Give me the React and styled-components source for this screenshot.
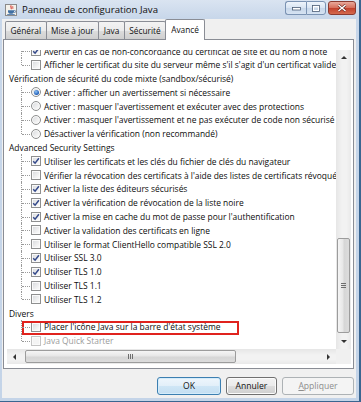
import React from "react";
import styled, { createGlobalStyle, css } from "styled-components";

const Global = createGlobalStyle`
  html, body { margin: 0; padding: 0; background: #ffffff; }
  body { font-family: "Open Sans", "Noto Sans", sans-serif; color: #111; }
`;

const FONT = `"Open Sans", "Noto Sans", sans-serif`;

const Window = styled.div`
  width: 361px;
  height: 402px;
  box-sizing: border-box;
  display: flex;
  flex-direction: column;
  background: linear-gradient(#dae4f1, #c8d7ea 18px, #c4d4e8);
  border-right: 2px solid #3a6590;
  border-bottom: 1px solid #3a6590;
  padding: 0 3px 3px 2px;
  overflow: hidden;
`;

const TitleBar = styled.div`
  height: 19px;
  flex: none;
  display: flex;
  align-items: center;
  padding-left: 3px;
  gap: 4px;
`;

const TitleText = styled.span`
  font-family: ${FONT};
  font-size: 9.6px;
  color: #101010;
  flex: 1;
  white-space: nowrap;
`;

const Controls = styled.div`
  display: flex;
  align-items: flex-start;
  align-self: flex-start;
  margin-top: 1px;
  gap: 2px;
`;

const CtrlGroup = styled.div`
  display: flex;
`;

const CtrlButton = styled.div`
  height: 14px;
  width: ${(p) => p.$w}px;
  box-sizing: border-box;
  border: 1px solid ${(p) => (p.$close ? "#8b3a30" : "#7b93b3")};
  display: flex;
  align-items: center;
  justify-content: center;
  background: ${(p) =>
    p.$close
      ? "linear-gradient(#e9a99b, #d66d5a 50%, #c1402c 51%, #d56a4e)"
      : "linear-gradient(#eef4fb, #d8e4f2 50%, #c7d7ea 51%, #d6e3f2)"};
  ${(p) =>
    p.$left &&
    css`
      border-radius: 3px 0 0 3px;
      border-right: none;
    `}
  ${(p) =>
    p.$right &&
    css`
      border-radius: 0 3px 3px 0;
    `}
  ${(p) =>
    p.$close &&
    css`
      border-radius: 3px;
    `}
`;

const Client = styled.div`
  flex: 1;
  background: #f0f0f0;
  display: flex;
  flex-direction: column;
  padding: 0 2px 0 1px;
`;

const TabStrip = styled.div`
  height: 20px;
  display: flex;
  align-items: flex-end;
  padding-left: 2px;
  position: relative;
  z-index: 2;
`;

const Tab = styled.div`
  font-family: ${FONT};
  font-size: 8.3px;
  color: #111;
  box-sizing: border-box;
  height: 18px;
  padding: 0 4.5px;
  margin-right: -1px;
  display: flex;
  align-items: center;
  white-space: nowrap;
  border: 1px solid #8a8d95;
  border-bottom: none;
  border-radius: 2px 2px 0 0;
  background: linear-gradient(#f3f3f3, #ebebeb 50%, #dddddd 51%, #cfcfcf);
  ${(p) =>
    p.$active &&
    css`
      height: 21px;
      margin-bottom: -1px;
      padding: 0 5px 2px;
      background: #ffffff;
      position: relative;
      z-index: 3;
    `}
`;

const TabPanel = styled.div`
  height: 330px;
  box-sizing: border-box;
  border: 1px solid #8a8d95;
  background: #ffffff;
  padding: 10px 2px 4px 3px;
  display: grid;
  grid-template-columns: 329px 15px;
  grid-template-rows: 299px 15px;
`;

const Viewport = styled.div`
  overflow: hidden;
  background: #ffffff;
  position: relative;
`;

const List = styled.div`
  margin-top: -5.9px;
  display: flex;
  flex-direction: column;
`;

const Row = styled.div`
  height: 13.8px;
  display: flex;
  align-items: center;
  white-space: nowrap;
  font-family: ${FONT};
  font-size: 8.45px;
  color: ${(p) => (p.$disabled ? "#9c9c9c" : "#0c0c0c")};
  position: relative;
`;

const HeaderRow = styled(Row)`
  padding-left: 2px;
`;

const ItemRow = styled(Row)`
  padding-left: 24px;
  gap: 3px;
  &::before {
    content: "";
    position: absolute;
    left: 14px;
    top: 0;
    bottom: ${(p) => (p.$last ? "50%" : "0")};
    border-left: 1px dotted #9a9a9a;
  }
  &::after {
    content: "";
    position: absolute;
    left: 15px;
    width: 8px;
    top: 50%;
    border-top: 1px dotted #9a9a9a;
  }
`;

const Box = styled.span`
  width: 10px;
  height: 10px;
  flex: none;
  box-sizing: border-box;
  border: 1px solid ${(p) => (p.$disabled ? "#c4c4c4" : "#8e8f8f")};
  background: ${(p) =>
    p.$disabled
      ? "#f4f4f4"
      : "linear-gradient(135deg, #d6d8db, #f4f4f4 70%, #fdfdfd)"};
  box-shadow: inset 0 0 0 1px #fafafa;
  display: flex;
  align-items: center;
  justify-content: center;
  border-radius: ${(p) => (p.$radio ? "50%" : "0")};
`;

const Dot = styled.span`
  width: 5px;
  height: 5px;
  border-radius: 50%;
  background: radial-gradient(circle at 40% 35%, #8fc3f5, #1d5ab5 70%);
`;

const Highlight = styled.span`
  position: absolute;
  left: 15px;
  top: 1px;
  width: 217px;
  height: 14px;
  box-sizing: border-box;
  border: 2px solid #e0231e;
  pointer-events: none;
`;

const VScroll = styled.div`
  display: flex;
  flex-direction: column;
  background: linear-gradient(to right, #e6e6e6, #f2f2f2 40%, #f2f2f2 70%, #e9e9e9);
`;

const HScroll = styled.div`
  display: flex;
  background: linear-gradient(#e6e6e6, #f2f2f2 40%, #f2f2f2 70%, #e9e9e9);
`;

const Corner = styled.div`
  background: #f0f0f0;
`;

const Arrow = styled.div`
  width: 15px;
  height: 15px;
  flex: none;
  display: flex;
  align-items: center;
  justify-content: center;
  &::before {
    content: "";
    width: 0;
    height: 0;
    ${(p) =>
      p.$dir === "up" &&
      css`
        border-left: 3px solid transparent;
        border-right: 3px solid transparent;
        border-bottom: 3px solid #333;
      `}
    ${(p) =>
      p.$dir === "down" &&
      css`
        border-left: 3px solid transparent;
        border-right: 3px solid transparent;
        border-top: 3px solid #333;
      `}
    ${(p) =>
      p.$dir === "left" &&
      css`
        border-top: 3px solid transparent;
        border-bottom: 3px solid transparent;
        border-right: 3px solid #333;
      `}
    ${(p) =>
      p.$dir === "right" &&
      css`
        border-top: 3px solid transparent;
        border-bottom: 3px solid transparent;
        border-left: 3px solid #333;
      `}
  }
`;

const Track = styled.div`
  flex: 1;
  display: flex;
  flex-direction: ${(p) => (p.$vertical ? "column" : "row")};
  justify-content: ${(p) => (p.$end ? "flex-end" : "flex-start")};
  padding: ${(p) => (p.$vertical ? "0 1px 1px" : "1px 0 1px 3px")};
`;

const Thumb = styled.div`
  box-sizing: border-box;
  border: 1px solid #9c9c9c;
  border-radius: 2px;
  display: flex;
  align-items: center;
  justify-content: center;
  ${(p) =>
    p.$vertical
      ? css`
          height: ${p.$size}px;
          background: linear-gradient(to right, #f5f5f5, #e7e7e7 45%, #d6d6d6 55%, #dcdcdc);
        `
      : css`
          width: ${p.$size}px;
          background: linear-gradient(#f5f5f5, #e7e7e7 45%, #d6d6d6 55%, #dcdcdc);
        `}
`;

const Grip = styled.span`
  ${(p) =>
    p.$vertical
      ? css`
          width: 5px;
          height: 5px;
          background: repeating-linear-gradient(#6e6e6e 0 1px, transparent 1px 2px);
        `
      : css`
          width: 5px;
          height: 5px;
          background: repeating-linear-gradient(to right, #6e6e6e 0 1px, transparent 1px 2px);
        `}
`;

const ButtonBar = styled.div`
  display: flex;
  justify-content: flex-end;
  gap: 5px;
  margin-top: 8px;
`;

const Button = styled.div`
  height: 18px;
  width: ${(p) => p.$w}px;
  box-sizing: border-box;
  border-radius: 3px;
  display: flex;
  align-items: center;
  justify-content: center;
  font-family: ${FONT};
  font-size: 8.6px;
  color: #111;
  border: 1px solid #707070;
  background: linear-gradient(#f2f2f2, #ebebeb 50%, #dddddd 51%, #cfcfcf);
  box-shadow: inset 0 0 0 1px #fbfbfb;
  ${(p) =>
    p.$default &&
    css`
      border-color: #3c7fb1;
      background: linear-gradient(#eef6fc, #e2eff9 50%, #cfe6f6 51%, #c4def1);
      box-shadow: inset 0 0 0 1px #d4ecfb;
    `}
  ${(p) =>
    p.$disabled &&
    css`
      border-color: #adb2b5;
      background: #f4f4f4;
      color: #8d8d8d;
      box-shadow: none;
    `}
`;

const Mnemonic = styled.span`
  text-decoration: underline;
`;

const JavaIcon = () => (
  <svg width="13" height="14" viewBox="0 0 13 14">
    <rect x="0.5" y="1.5" width="11" height="11" fill="#f4f1ea" stroke="#8b8b8b" />
    <path d="M6.3 2.5c-1.6 1.2 1 2-0.4 3.5" stroke="#d4342a" strokeWidth="1.1" fill="none" />
    <path d="M8 3.2c-1.2 0.9 0.7 1.6-0.3 2.6" stroke="#d4342a" strokeWidth="0.9" fill="none" />
    <path d="M3 7.2h6v1.2c0 1.4-1.3 2.3-3 2.3S3 9.8 3 8.4z" fill="#3f6fa3" />
    <path d="M9 7.6h0.8a0.9 0.9 0 0 1 0 1.8H8.8" stroke="#3f6fa3" strokeWidth="0.8" fill="none" />
    <path d="M2.2 11.5h7.6" stroke="#3f6fa3" strokeWidth="0.8" />
  </svg>
);

const CheckMark = () => (
  <svg width="8" height="8" viewBox="0 0 8 8">
    <path d="M1.2 4.2l1.9 2L6.9 1.2" stroke="#34498a" strokeWidth="1.5" fill="none" />
  </svg>
);

const MinGlyph = () => (
  <svg width="9" height="5" viewBox="0 0 9 5">
    <rect x="0.5" y="1.5" width="8" height="2.5" fill="#fff" stroke="#4b5d75" strokeWidth="0.8" />
  </svg>
);

const MaxGlyph = () => (
  <svg width="8" height="7" viewBox="0 0 8 7">
    <rect x="0.5" y="0.5" width="7" height="6" fill="#fff" stroke="#4b5d75" strokeWidth="0.8" />
    <rect x="2" y="2.4" width="4" height="2.6" fill="#c9d8ea" />
  </svg>
);

const CloseGlyph = () => (
  <svg width="10" height="8" viewBox="0 0 10 8">
    <path d="M1.5 1l7 6M8.5 1l-7 6" stroke="#5a1a12" strokeWidth="2.6" />
    <path d="M1.5 1l7 6M8.5 1l-7 6" stroke="#ffffff" strokeWidth="1.6" />
  </svg>
);

const groups = [
  {
    title: null,
    items: [
      { label: "Avertir en cas de non-concordance du certificat de site et du nom d'hôte", checked: true },
      { label: "Afficher le certificat du site du serveur même s'il s'agit d'un certificat valide" },
    ],
  },
  {
    title: "Vérification de sécurité du code mixte (sandbox/sécurisé)",
    radio: true,
    items: [
      { label: "Activer : afficher un avertissement si nécessaire", checked: true },
      { label: "Activer : masquer l'avertissement et exécuter avec des protections" },
      { label: "Activer : masquer l'avertissement et ne pas exécuter de code non sécurisé" },
      { label: "Désactiver la vérification (non recommandé)" },
    ],
  },
  {
    title: "Advanced Security Settings",
    items: [
      { label: "Utiliser les certificats et les clés du fichier de clés du navigateur", checked: true },
      { label: "Vérifier la révocation des certificats à l'aide des listes de certificats révoqués (CRL)" },
      { label: "Activer la liste des éditeurs sécurisés", checked: true },
      { label: "Activer la vérification de révocation de la liste noire", checked: true },
      { label: "Activer la mise en cache du mot de passe pour l'authentification", checked: true },
      { label: "Activer la validation des certificats en ligne" },
      { label: "Utiliser le format ClientHello compatible SSL 2.0" },
      { label: "Utiliser SSL 3.0", checked: true },
      { label: "Utiliser TLS 1.0", checked: true },
      { label: "Utiliser TLS 1.1" },
      { label: "Utiliser TLS 1.2" },
    ],
  },
  {
    title: "Divers",
    items: [
      { label: "Placer l'icône Java sur la barre d'état système", highlight: true },
      { label: "Java Quick Starter", disabled: true },
    ],
  },
];

const tabs = ["Général", "Mise à jour", "Java", "Sécurité", "Avancé"];

export default function App() {
  return (
    <>
      <Global />
      <Window>
        <TitleBar>
          <JavaIcon />
          <TitleText>Panneau de configuration Java</TitleText>
          <Controls>
            <CtrlGroup>
              <CtrlButton $w={21} $left>
                <MinGlyph />
              </CtrlButton>
              <CtrlButton $w={20} $right>
                <MaxGlyph />
              </CtrlButton>
            </CtrlGroup>
            <CtrlButton $w={28} $close>
              <CloseGlyph />
            </CtrlButton>
          </Controls>
        </TitleBar>
        <Client>
          <TabStrip>
            {tabs.map((t) => (
              <Tab key={t} $active={t === "Avancé"}>
                {t}
              </Tab>
            ))}
          </TabStrip>
          <TabPanel>
            <Viewport>
              <List>
                {groups.map((g, gi) => (
                  <React.Fragment key={gi}>
                    {g.title && <HeaderRow>{g.title}</HeaderRow>}
                    {g.items.map((it, ii) => (
                      <ItemRow
                        key={ii}
                        $last={ii === g.items.length - 1}
                        $disabled={it.disabled}
                      >
                        <Box $radio={g.radio} $disabled={it.disabled}>
                          {it.checked && (g.radio ? <Dot /> : <CheckMark />)}
                        </Box>
                        {it.label}
                        {it.highlight && <Highlight />}
                      </ItemRow>
                    ))}
                  </React.Fragment>
                ))}
              </List>
            </Viewport>
            <VScroll>
              <Arrow $dir="up" />
              <Track $vertical $end>
                <Thumb $vertical $size={95}>
                  <Grip $vertical />
                </Thumb>
              </Track>
              <Arrow $dir="down" />
            </VScroll>
            <HScroll>
              <Arrow $dir="left" />
              <Track>
                <Thumb $size={211}>
                  <Grip />
                </Thumb>
              </Track>
              <Arrow $dir="right" />
            </HScroll>
            <Corner />
          </TabPanel>
          <ButtonBar>
            <Button $w={64} $default>
              OK
            </Button>
            <Button $w={51}>Annuler</Button>
            <Button $w={72} $disabled>
              <Mnemonic>A</Mnemonic>ppliquer
            </Button>
          </ButtonBar>
        </Client>
      </Window>
    </>
  );
}
